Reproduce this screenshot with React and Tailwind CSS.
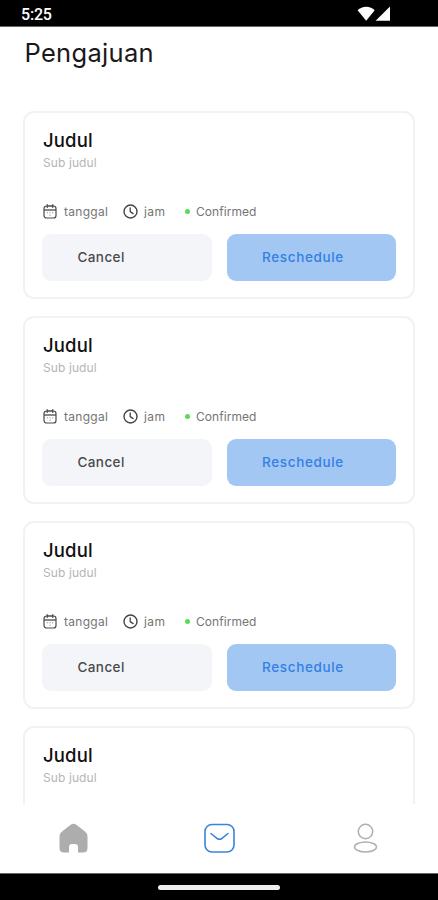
const CalendarIcon = () => (
  <svg width="14" height="15" viewBox="0 0 14 15" fill="none" stroke="#4a4a4a" className="shrink-0">
    <rect x="1" y="2" width="12" height="12" rx="2.6" strokeWidth="1.2" />
    <path d="M1 6h12" strokeWidth="1.3" />
    <path d="M4.2 0.6v2.8M9.8 0.6v2.8M4.2 2h5.6" strokeWidth="1.2" strokeLinecap="round" />
    <path d="M3.8 8.8h1M6.5 8.8h1M9.2 8.8h1M6.5 11.2h1" strokeWidth="1" opacity="0.7" />
  </svg>
);

const ClockIcon = () => (
  <svg width="15" height="15" viewBox="0 0 15 15" fill="none" stroke="#444" className="shrink-0" strokeLinecap="round">
    <circle cx="7.5" cy="7.5" r="6.5" strokeWidth="1.4" />
    <path d="M7.2 3.8v3.8l2.9 2" strokeWidth="1.3" />
  </svg>
);

const CardHeading = () => (
  <>
    <h2 className="h-[22px] text-[18.5px] leading-[22px] font-medium tracking-[0.15px] text-[#111]">Judul</h2>
    <p className="mt-[3px] h-[18px] text-[12px] leading-[18px] tracking-[0.1px] text-[#b5b5b5]">Sub judul</p>
  </>
);

const Card = () => (
  <article className="h-[188px] w-[392px] shrink-0 rounded-[11px] border-2 border-[#f2f2f3] bg-white pl-[18px] pr-[16px] pt-4">
    <CardHeading />
    <div className="mt-[31px] flex h-[17px] items-center text-[12px] leading-[17px] text-[#757575]">
      <CalendarIcon />
      <span className="ml-[7px] -mt-px w-[59px] tracking-[0.3px]">tanggal</span>
      <ClockIcon />
      <span className="ml-[6px] w-[41px] tracking-[0.4px]">jam</span>
      <i className="h-[5px] w-[5px] rounded-full bg-[#58dc58]" />
      <span className="ml-[6px] -mt-px tracking-[0.05px]">Confirmed</span>
    </div>
    <div className="-ml-px mt-[14px] flex gap-[15px]">
      <button className="h-[47px] w-[170px] shrink-0 rounded-[9px] bg-[#f3f5f9] pl-[35.5px] text-left text-[13.5px] font-medium tracking-[0.4px] text-[#4a4a4a]">Cancel</button>
      <button className="h-[47px] w-[169px] shrink-0 rounded-[9px] bg-[#a2c7f2] pl-[35px] text-left text-[13.5px] font-medium tracking-[0.65px] text-[#3280e4]">Reschedule</button>
    </div>
  </article>
);

export default function App() {
  return (
    <div className="flex h-[900px] w-[438px] flex-col overflow-hidden bg-white font-[Inter,'Liberation_Sans',sans-serif]">
      <header className="flex h-[27px] shrink-0 items-center justify-between border-b border-[#666] bg-black pl-[21px] pr-[47px] text-white">
        <span className="pt-[3px] font-[Roboto,sans-serif] text-[16px] leading-[20px] font-medium tracking-[-0.2px]">5:25</span>
        <svg width="34" height="16" viewBox="0 0 34 16" fill="white" className="mt-px">
          <path d="M.6 4.2C5-.5 13.5-.5 17.7 4.2L9.2 14.8Z" />
          <path d="M33 .6V14.8H18.6Z" />
        </svg>
      </header>
      <h1 className="h-[84px] shrink-0 pl-[24.5px] pt-[11px] text-[25.5px] leading-[30px] tracking-[0.3px] text-[#191919]">Pengajuan</h1>
      <main className="flex h-[693px] shrink-0 flex-col gap-[17px] pl-[23px]">
        <Card />
        <Card />
        <Card />
        <article className="h-[78px] w-[392px] shrink-0 rounded-t-[11px] border-2 border-b-0 border-[#f2f2f3] pl-[18px] pt-4">
          <CardHeading />
        </article>
      </main>
      <nav className="flex h-[70px] shrink-0 items-start justify-between border-b border-[#666] pl-[59px] pr-[60px] pt-[19px]">
        <svg width="29" height="31" viewBox="0 0 29 31" fill="#adadad">
          <path d="M11.7 1.7Q14.5-.3 17.3 1.7L26 8.5Q28.5 10.5 28.5 13.5V25Q28.5 29.5 24 29.5H19V24Q19 21 16 21H13Q10 21 10 24V29.5H5Q.5 29.5 .5 25V13.5Q.5 10.5 3 8.5Z" />
        </svg>
        <svg width="32" height="31" viewBox="0 0 32 31" fill="none" stroke="#3c83dc" strokeWidth="1.6" strokeLinecap="round" className="-ml-[2px]">
          <rect x="1" y="1.5" width="29" height="27.5" rx="7" />
          <path d="M7 10.5l6.2 5q2.3 1.6 4.6 0l6.2-5" />
        </svg>
        <svg width="25" height="31" viewBox="0 0 25 31" fill="none" stroke="#b0b0b0" strokeWidth="1.5">
          <circle cx="12.5" cy="8.5" r="7.2" />
          <ellipse cx="12.5" cy="24" rx="11" ry="4.9" />
        </svg>
      </nav>
      <footer className="flex h-[26px] shrink-0 justify-center bg-black pt-[11px]">
        <div className="h-[4.5px] w-[122px] rounded-full bg-[#eee]" />
      </footer>
    </div>
  );
}
